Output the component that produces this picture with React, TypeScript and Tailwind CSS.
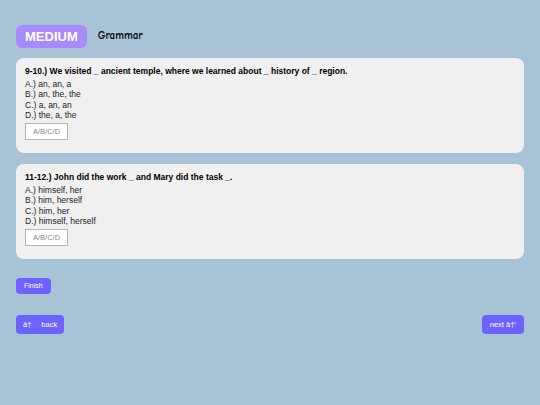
import React from "react";

type Question = { id: string; prompt: string; options: string[] };

const questions: Question[] = [
  {
    id: "9-10",
    prompt: "9-10.) We visited _ ancient temple, where we learned about _ history of _ region.",
    options: ["A.) an, an, a", "B.) an, the, the", "C.) a, an, an", "D.) the, a, the"],
  },
  {
    id: "11-12",
    prompt: "11-12.) John did the work _ and Mary did the task _.",
    options: ["A.) himself, her", "B.) him, herself", "C.) him, her", "D.) himself, herself"],
  },
];

function QuestionCard({ q }: { q: Question }) {
  return (
    <div className="rounded-[8px] bg-[#f0f0f0] pl-[9px] pr-3 pt-[8px] pb-[13px] h-[95px]">
      <p className="text-[8.5px] font-bold leading-[10px] text-black">{q.prompt}</p>
      <div className="mt-[3px] text-[8.5px] leading-[10.3px] text-[#222]">
        {q.options.map((o) => (
          <div key={o}>{o}</div>
        ))}
      </div>
      <input
        placeholder="A/B/C/D"
        className="mt-[3px] block h-[17px] w-[43px] border border-[#b5b5b5] bg-white px-[7px] text-[7.5px] text-[#444] placeholder:text-[#8a8a8a] outline-none"
      />
    </div>
  );
}

export default function App() {
  return (
    <div
      className="h-[405px] w-[540px] bg-[#a9c3d6] px-4 pt-[25px]"
      style={{ fontFamily: '"Liberation Sans", Arial, sans-serif' }}
    >
      <div className="flex items-center gap-[11px]">
        <span className="flex h-[23px] items-center rounded-[6px] bg-[#a78bfa] px-[9px] text-[13px] font-bold text-white">
          MEDIUM
        </span>
        <span
          className="text-[11px] font-bold text-black"
          style={{ fontFamily: '"Comic Sans MS", "Comic Neue", cursive' }}
        >
          Grammar
        </span>
      </div>

      <div className="mt-[10px] flex flex-col gap-[11px]">
        {questions.map((q) => (
          <QuestionCard key={q.id} q={q} />
        ))}
      </div>

      <button className="mt-[19px] flex h-[16px] items-center rounded-[4px] bg-[#6c63ff] px-[8px] text-[7px] text-white">
        Finish
      </button>

      <div className="mt-[21px] flex items-center justify-between">
        <button className="flex h-[19px] items-center rounded-[4px] bg-[#6c63ff] px-[7px] text-[7.5px] text-white">
          <span>â†</span>
          <span className="ml-[10px]">back</span>
        </button>
        <button className="flex h-[19px] items-center rounded-[4px] bg-[#6c63ff] px-[8px] text-[7.5px] text-white">
          next â†’
        </button>
      </div>
    </div>
  );
}
